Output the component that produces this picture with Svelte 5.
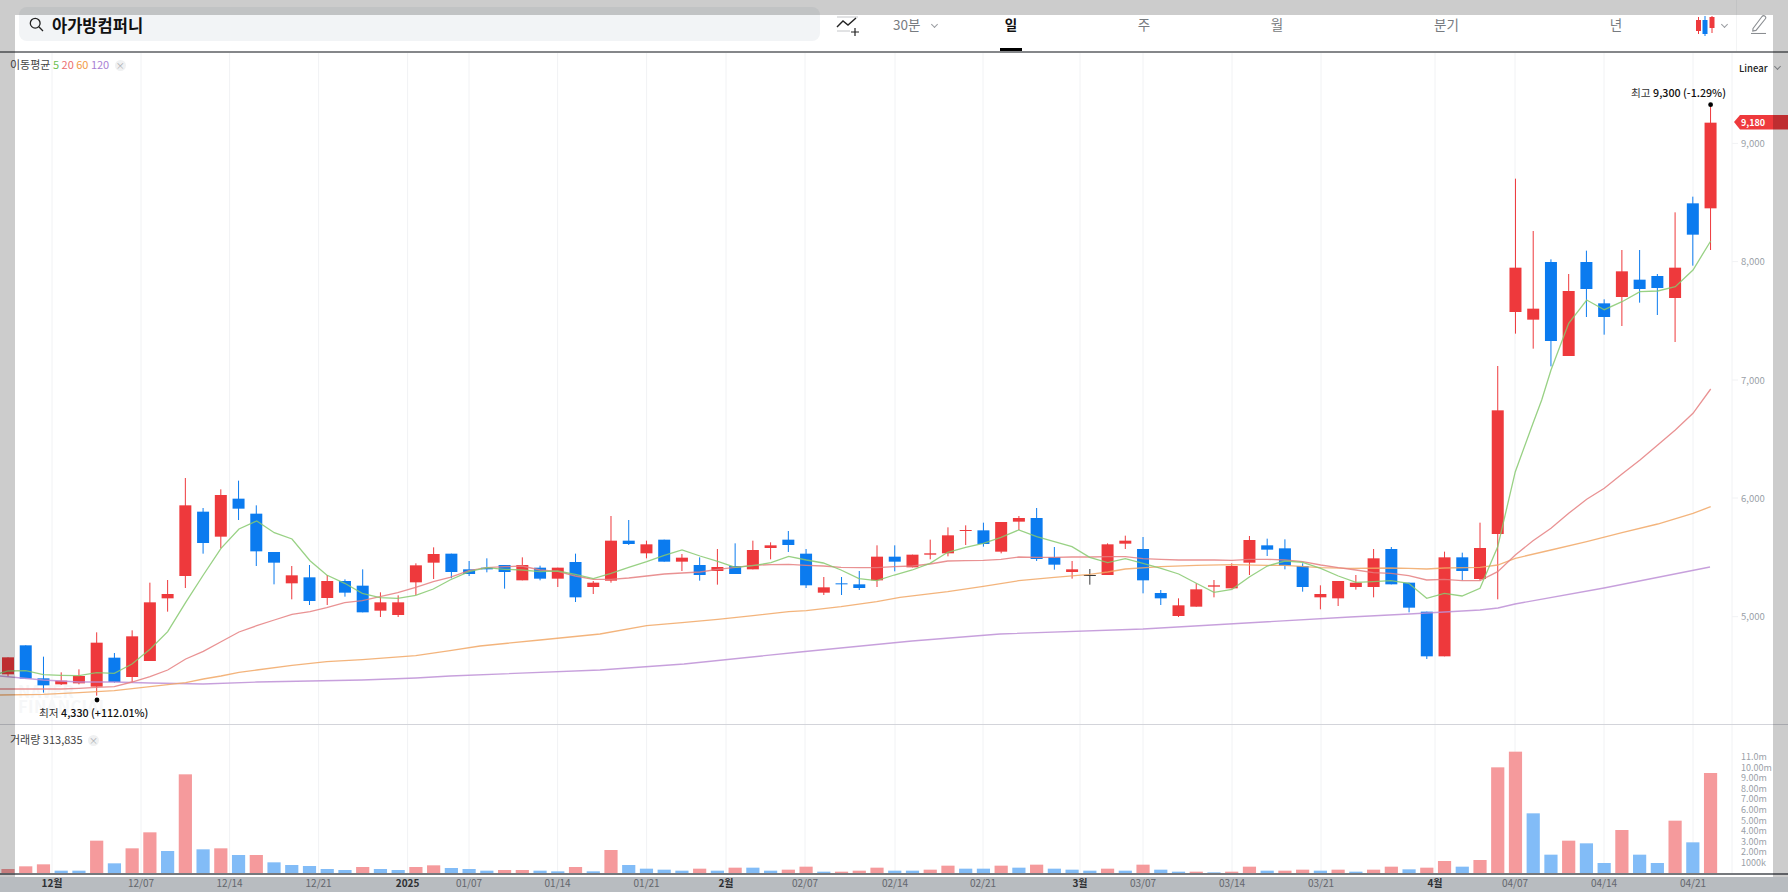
<script lang="ts">
	type Candle = { x: number; wt: number; bt: number; bb: number; wb: number; c: string };

	const step = 17.735;
	const cx = (i: number) => 8 + step * i;
	const color = { r: '#ee393c', b: '#0b7bef', k: '#3a3a3a' };

	// rows: wick top, body top, body bottom, wick bottom, colour (3x crop values)
	const rows: [number, any[][]][] = [
		[440, [
			[652, 652, 703, 710, 'r'], [616, 616, 716, 716, 'b'], [650, 715, 736, 758, 'b'], [697, 722, 733, 735, 'r'],
			[688, 708, 730, 733, 'r'], [577, 608, 740, 767, 'r'], [639, 653, 726, 728, 'b'], [571, 589, 711, 727, 'r'],
			[428, 487, 663, 663, 'r'], [420, 462, 475, 515, 'r'], [114, 196, 408, 444, 'r'], [204, 215, 309, 341, 'b'],
			[148, 165, 290, 325, 'r'], [122, 176, 206, 240, 'b'], [196, 221, 334, 378, 'b'], [336, 336, 368, 433, 'b'],
			[378, 406, 430, 478, 'r'], [375, 412, 483, 495, 'b'], [405, 423, 474, 495, 'r'], [418, 423, 458, 470, 'b'],
			[388, 437, 517, 517, 'b'], [457, 487, 512, 531, 'r'], [466, 487, 525, 531, 'r'], [370, 376, 427, 465, 'r'],
			[322, 342, 368, 417, 'r']
		]],
		[480, [
			[221, 221, 276, 295, 'b'], [243, 268, 282, 288, 'b'], [235, 263, 268, 277, 'b'], [255, 255, 276, 326, 'b'],
			[232, 255, 301, 301, 'r'], [257, 263, 296, 301, 'b'], [263, 263, 296, 321, 'r'], [221, 246, 352, 366, 'b'],
			[303, 308, 321, 342, 'r'], [108, 182, 302, 308, 'r'], [120, 182, 192, 195, 'b'], [182, 193, 220, 235, 'r'],
			[179, 179, 245, 245, 'b'], [222, 233, 245, 273, 'r'], [232, 255, 285, 302, 'b'], [207, 261, 273, 314, 'r'],
			[190, 258, 282, 282, 'b'], [182, 210, 268, 268, 'r'], [187, 196, 204, 238, 'r'], [153, 179, 195, 216, 'b'],
			[207, 221, 316, 324, 'b'], [291, 322, 338, 345, 'r'], [291, 310, 313, 345, 'b'], [273, 313, 324, 330, 'b'],
			[196, 230, 301, 321, 'r'], [196, 230, 245, 274, 'b'],
			[224, 224, 262, 262, 'r'], [179, 220, 224, 238, 'r'], [142, 166, 220, 229, 'r'], [136, 150, 153, 195, 'r'],
			[128, 151, 192, 200, 'b'], [126, 126, 215, 220, 'r'], [108, 114, 125, 150, 'r'], [84, 114, 237, 243, 'b'],
			[201, 231, 254, 269, 'b'], [243, 268, 276, 296, 'r'], [267, 285, 288, 314, 'k'], [190, 193, 285, 285, 'r'],
			[167, 182, 191, 207, 'r'], [171, 207, 301, 340, 'b'], [330, 339, 355, 375, 'b'], [355, 376, 408, 411, 'r'],
			[310, 328, 380, 380, 'r'], [300, 316, 320, 352, 'r'], [250, 258, 325, 325, 'r'], [168, 180, 248, 285, 'r'],
			[176, 196, 209, 228, 'b'], [178, 205, 257, 268, 'b'], [250, 258, 321, 335, 'b'], [316, 342, 352, 388, 'r'],
			[303, 303, 355, 378, 'r']
		]],
		[400, [
			[525, 548, 561, 569, 'r'], [447, 475, 561, 592, 'r'], [441, 447, 553, 553, 'b'], [548, 548, 623, 637, 'b'],
			[635, 635, 769, 777, 'b'], [455, 472, 769, 769, 'r'], [458, 472, 513, 541, 'b'], [368, 444, 537, 541, 'r'],
			[-102, 31, 402, 598, 'r']
		]],
		[80, [
			[296, 563, 696, 761, 'r'], [453, 686, 719, 806, 'r'], [538, 546, 783, 859, 'b'], [582, 633, 828, 828, 'r'],
			[512, 546, 627, 711, 'b'], [658, 670, 711, 764, 'b'], [510, 574, 651, 738, 'r'], [510, 599, 627, 668, 'b'],
			[582, 588, 624, 705, 'b'], [397, 563, 654, 786, 'r'], [350, 370, 464, 557, 'b'], [80, 128, 385, 510, 'r']
		]]
	];

	const candles: Candle[] = rows
		.flatMap(([off, list]) => list.map((r) => ({
			wt: off + r[0] / 3, bt: off + r[1] / 3, bb: off + r[2] / 3, wb: off + r[3] / 3, c: color[r[4]]
		})))
		.map((c, i) => ({ ...c, x: cx(i) }));

	// moving averages, [x, y] per crop with its offset
	function line(parts: [number, number, number[]][]): string {
		const pts: string[] = [];
		for (const [ox, oy, vals] of parts) {
			for (let i = 0; i < vals.length; i += 2) {
				pts.push(`${(ox + vals[i] / 3).toFixed(1)},${(oy + vals[i + 1] / 3).toFixed(1)}`);
			}
		}
		return pts.join(' ');
	}

	const ma5 = line([
		[0, 440, [0, 700, 24, 693, 77, 692, 130, 704, 183, 706, 237, 707, 290, 698, 343, 700, 396, 672, 450, 628, 503, 575, 557, 487, 610, 405, 663, 325, 717, 267, 770, 243, 823, 278, 876, 297, 930, 362, 980, 405, 1034, 430, 1087, 460, 1140, 473, 1193, 475, 1247, 466, 1300, 447]],
		[450, 480, [0, 300, 57, 275, 110, 263, 163, 268, 216, 270, 270, 275, 323, 273, 376, 283, 430, 296, 483, 280, 536, 262, 590, 245, 643, 226, 696, 210, 750, 228, 803, 244, 856, 262, 909, 257, 963, 248, 1016, 229, 1069, 240, 1120, 249, 1173, 270, 1227, 296, 1280, 302, 1333, 285]],
		[900, 480, [37, 270, 90, 250, 143, 217, 197, 202, 250, 190, 303, 172, 356, 150, 410, 170, 463, 185, 516, 200, 569, 232, 623, 248, 676, 236, 729, 250, 783, 265, 836, 282, 889, 310, 942, 337, 996, 328, 1049, 290, 1102, 258, 1155, 243, 1208, 247, 1262, 265, 1315, 288]],
		[1350, 400, [18, 547, 70, 545, 123, 542, 176, 550, 230, 595, 283, 580, 336, 588, 390, 565, 443, 440, 496, 215, 549, 70]],
		[1350, 80, [575, 960, 603, 870, 656, 730, 710, 660, 763, 689, 816, 665, 870, 635, 923, 633, 976, 620, 1029, 570, 1082, 483]]
	]);
	const ma20 = line([
		[0, 440, [0, 747, 77, 747, 183, 747, 237, 745, 290, 742, 343, 740, 396, 726, 450, 710, 503, 690, 557, 657, 610, 634, 663, 605, 717, 576, 770, 557, 823, 540, 876, 523, 930, 515, 980, 503, 1034, 488, 1087, 482, 1140, 470, 1193, 458, 1247, 442, 1300, 425]],
		[450, 480, [0, 292, 57, 272, 110, 263, 163, 260, 216, 258, 270, 270, 323, 274, 376, 288, 430, 298, 483, 298, 536, 294, 590, 288, 643, 282, 696, 279, 750, 276, 803, 268, 856, 262, 909, 256, 963, 254, 1016, 253, 1069, 256, 1120, 258, 1173, 262, 1227, 263, 1280, 263, 1333, 260]],
		[900, 480, [37, 258, 90, 252, 143, 243, 197, 242, 250, 241, 303, 238, 356, 231, 410, 232, 463, 232, 516, 231, 569, 231, 623, 230, 676, 230, 729, 236, 783, 238, 836, 240, 889, 240, 942, 240, 996, 241, 1049, 238, 1102, 238, 1155, 240, 1208, 245, 1262, 255, 1315, 263]],
		[1350, 400, [18, 510, 70, 518, 123, 520, 176, 527, 230, 540, 283, 538, 336, 542, 390, 542, 443, 515, 496, 465, 549, 422, 603, 385, 656, 340, 710, 298, 763, 265, 816, 222, 870, 180, 923, 135, 976, 90, 1029, 40, 1082, -33]]
	]);
	const ma60 = line([
		[0, 440, [0, 765, 130, 763, 237, 758, 343, 752, 450, 740, 557, 728, 610, 717, 663, 708, 717, 697, 770, 690, 876, 676, 980, 665, 1087, 659, 1247, 647, 1350, 632]],
		[480, 620, [0, 78, 180, 60, 360, 42]],
		[450, 480, [590, 437, 696, 428, 803, 418, 909, 407, 1016, 395, 1069, 392, 1173, 380, 1280, 365, 1350, 352]],
		[900, 480, [143, 335, 250, 319, 356, 302, 463, 292, 569, 283, 623, 276, 676, 267, 783, 260, 889, 256, 996, 254, 1102, 256, 1155, 256, 1262, 263]],
		[1350, 400, [0, 505, 123, 504, 176, 505, 230, 507, 283, 504, 390, 502, 443, 495, 496, 475, 603, 450, 710, 425, 816, 398, 923, 372, 1029, 340, 1082, 320]]
	]);
	const ma120 = '0,676 43,680 79,682 114,682 150,683 203,684 257,682 310,681 362,680 416,678 450,676 600,670 684,664 800,652 912,641 1000,634 1143,629 1350,617 1409,614 1480,610 1498,608 1515,604 1604,588 1710,567';

	// volume bars: height in px, colour
	const baseline = 873;
	const vol3: [string, number[]][] = [
		['r', [748, 740, 734]], ['b', [753, 753]], ['r', [663]], ['b', [731]], ['r', [686, 638]], ['b', [694]], ['r', [464]],
		['b', [689]], ['r', [686]], ['b', [706]], ['r', [706]], ['b', [728, 736, 739, 748, 751]], ['r', [742]], ['b', [748, 751]],
		['r', [742, 737]], ['b', [745, 748, 753]], ['r', [751, 751]], ['b', [753, 755]], ['r', [742]], ['b', [755]]
	];
	const vol10: [string, number[]][] = [
		['r', [391]], ['b', [436, 447, 450, 453]], ['r', [447]], ['b', [453]], ['r', [444]], ['b', [444, 453]], ['r', [450, 441]],
		['b', [456]], ['r', [456, 453, 444]], ['b', [453, 453]], ['r', [450, 438]], ['b', [447, 447]], ['r', [438]], ['b', [444]],
		['r', [435]], ['b', [447, 450, 453]], ['r', [447]], ['b', [453]], ['r', [435]], ['b', [450, 456]], ['r', [456]], ['b', [458]],
		['r', [456, 441]], ['b', [453]], ['r', [453, 450]], ['b', [453]], ['r', [450]], ['b', [456]], ['r', [450, 441]]
	];
	const vol4: [string, number[]][] = [
		['b', [510]], ['r', [505, 485]], ['b', [502]], ['r', [482, 204, 157]], ['b', [342, 466]], ['r', [424]], ['b', [432, 491]],
		['r', [392]], ['b', [466, 491]], ['r', [364]], ['b', [429]], ['r', [221]]
	];
	const flat = (g: [string, number[]][], base: number) =>
		g.flatMap(([c, list]) => list.map((v) => ({ c, h: (base - v) / 3 })));
	const volumes = [...flat(vol3, 760), ...flat(vol10, 460), ...flat(vol4, 521)];

	const grid = [52, 141, 229.6, 318.6, 407.6, 469, 557.6, 646.6, 726, 805, 895, 983, 1080, 1143, 1232, 1321, 1435, 1515, 1604, 1693];
	const dates = [
		['12월', 1], ['12/07'], ['12/14'], ['12/21'], ['2025', 1], ['01/07'], ['01/14'], ['01/21'], ['2월', 1], ['02/07'],
		['02/14'], ['02/21'], ['3월', 1], ['03/07'], ['03/14'], ['03/21'], ['4월', 1], ['04/07'], ['04/14'], ['04/21']
	];
	const prices = [['9,000', 143.4], ['8,000', 261.6], ['7,000', 380], ['6,000', 498], ['5,000', 616.7]];
	const volTicks = ['11.0m', '10.00m', '9.00m', '8.00m', '7.00m', '6.00m', '5.00m', '4.00m', '3.00m', '2.00m', '1000k'];
	const tabs = ['일', '주', '월', '분기', '년'];
</script>

<div class="page">
	<header class="top">
		<div class="search">
			<svg width="15" height="15" viewBox="0 0 15 15" fill="none" stroke="#222" stroke-width="1.3">
				<circle cx="6.2" cy="6.2" r="4.9" />
				<path d="M9.8 9.8 L14 14" />
			</svg>
			<span>아가방컴퍼니</span>
		</div>
		<div class="indicator">
			<svg width="24" height="21" viewBox="0 0 24 21" fill="none">
				<path d="M1 1 H22" stroke="#c4c6c9" />
				<path d="M1 15 H14" stroke="#c4c6c9" />
				<path d="M1 11 L7 5 L12 9 L20 2" stroke="#222" stroke-width="1.4" />
				<path d="M19 12 V20 M15 16 H23" stroke="#222" stroke-width="1.2" />
			</svg>
		</div>
		<div class="interval">30분 <i class="chev"></i></div>
		<nav class="tabs">
			{#each tabs as tab, i}
				<span class="tab tab{i}" class:on={i === 0}>{tab}</span>
			{/each}
		</nav>
		<div class="kind">
			<svg width="20" height="22" viewBox="0 0 20 22">
				<path d="M3.5 2 V19 M17 1 V18" stroke="#ee393c" />
				<path d="M10 1 V21" stroke="#0b7bef" />
				<rect x="1" y="5" width="5" height="11" fill="#ee393c" />
				<rect x="7.5" y="5" width="5" height="14" fill="#0b7bef" />
				<rect x="14.5" y="2" width="5" height="11" fill="#ee393c" />
			</svg>
			<i class="chev"></i>
		</div>
		<div class="draw">
			<svg width="16" height="20" viewBox="0 0 16 20" fill="none" stroke="#8a8d91" stroke-width="1.1">
				<path d="M2 14.5 L11 2.5 Q12.5 1 14 2.2 Q15.5 3.6 14.2 5 L5 16.4 L1.8 17 Z" />
				<path d="M0 19.5 H15" />
			</svg>
		</div>
	</header>

	<section class="price">
		<svg class="plot" width="1788" height="671" viewBox="0 53 1788 671">
			{#each grid as g}
				<line x1={g} x2={g} y1="53" y2="724" class="gridline" />
			{/each}
			<line x1="1732" x2="1732" y1="53" y2="724" class="gridline" />
			{#each prices as p}
				<line x1="1732" x2="1738" y1={p[1]} y2={p[1]} class="gridline" />
				<text x="1741" y={+p[1] + 3.5} class="tick">{p[0]}</text>
			{/each}

			<text x="18" y="698" class="mark">NAVER</text>
			<text x="18" y="713" class="mark">FINANCIAL</text>

			{#each candles as c}
				<line x1={c.x} x2={c.x} y1={c.wt} y2={c.wb} stroke={c.c} stroke-width="1" />
				<rect x={c.x - 6} y={c.bt} width="12" height={c.bb - c.bt} fill={c.c} />
			{/each}

			<polyline points={ma120} class="ma" stroke="#bd8fd6" />
			<polyline points={ma60} class="ma" stroke="#f1a765" />
			<polyline points={ma20} class="ma" stroke="#e57f80" />
			<polyline points={ma5} class="ma" stroke="#86c96f" />

			<circle cx="97" cy="700" r="2.4" fill="#000" />
			<circle cx="1710.6" cy="104.7" r="2.4" fill="#000" />
			<text x="39" y="717" class="note">최저 <tspan class="strong">4,330 (+112.01%)</tspan></text>
			<text x="1631" y="97" class="note">최고 <tspan class="strong">9,300 (-1.29%)</tspan></text>

			<path d="M1734 122 L1740 115 H1788 V129.4 H1740 Z" fill="#ee393c" />
			<text x="1741" y="125.5" class="last">9,180</text>
		</svg>
		<div class="legend">
			이동평균 <b class="c5">5</b> <b class="c20">20</b> <b class="c60">60</b> <b class="c120">120</b>
			<i class="close">×</i>
		</div>
		<div class="scale">Linear <i class="chev"></i></div>
	</section>

	<section class="volume">
		<svg class="plot" width="1788" height="150" viewBox="0 725 1788 150">
			{#each grid as g}
				<line x1={g} x2={g} y1="725" y2="873" class="gridline" />
			{/each}
			<line x1="1732" x2="1732" y1="725" y2="873" class="gridline" />
			<rect x="0" y="873" width="1788" height="2" fill="#76797d" />
			{#each volumes as v, i}
				<rect x={cx(i) - 6.6} y={baseline - v.h} width="13.2" height={v.h} fill={v.c === 'r' ? '#f59a9c' : '#82bcf7'} />
			{/each}
			{#each volTicks as t, i}
				<text x="1741" y={760 + i * 10.6} class="tick small">{t}</text>
			{/each}
		</svg>
		<div class="legend">거래량 313,835 <i class="close">×</i></div>
	</section>

	<footer class="axis">
		<svg class="plot" width="1788" height="17" viewBox="0 875 1788 17">
			<rect x="0" y="877" width="1788" height="15" fill="#e7ebf0" />
			{#each dates as d, i}
				<text x={grid[i]} y="887" class="date" class:bold={d[1]}>{d[0]}</text>
			{/each}
		</svg>
	</footer>

	<div class="frame"></div>
</div>

<style>
	:global(body) {
		font-family: 'Noto Sans CJK KR', 'Noto Sans', sans-serif;
		background: #fff;
		overflow: hidden;
	}

	.page {
		position: relative;
		width: 1788px;
		height: 892px;
		display: flex;
		flex-direction: column;
		overflow: hidden;
		background: #fff;
		color: #222;
	}

	/* the grey border around the popup sits over everything */
	.frame {
		position: absolute;
		inset: 0;
		border: 15px solid rgba(0, 0, 0, 0.2);
		pointer-events: none;
	}

	.top {
		flex: none;
		height: 53px;
		box-sizing: border-box;
		border-bottom: 2px solid #85878a;
		display: flex;
		align-items: flex-start;
		font-size: 13.5px;
		color: #777b80;
	}

	.search {
		flex: none;
		width: 801px;
		height: 34px;
		margin: 7px 0 0 19px;
		padding: 1px 0 0 10px;
		box-sizing: border-box;
		border-radius: 8px;
		background: #f2f4f6;
		display: flex;
		align-items: center;
		gap: 8px;
		font-size: 16.5px;
		font-weight: 700;
		color: #111;
	}

	.indicator {
		flex: none;
		width: 70px;
		height: 51px;
		padding: 16px 14px 0 0;
		box-sizing: border-box;
		display: flex;
		justify-content: center;
	}

	.interval {
		flex: none;
		width: 55px;
		margin-top: 15px;
		padding-left: 3px;
		box-sizing: border-box;
		line-height: 18px;
		white-space: nowrap;
	}

	.chev {
		display: inline-block;
		width: 4px;
		height: 4px;
		margin: 0 0 3px 9px;
		border-right: 1px solid #9a9da1;
		border-bottom: 1px solid #9a9da1;
		transform: rotate(45deg);
	}

	.tabs {
		flex: none;
		display: flex;
		height: 51px;
	}

	.tab {
		position: relative;
		flex: none;
		width: 132px;
		padding-top: 15px;
		box-sizing: border-box;
		line-height: 18px;
		text-align: center;
	}

	.tab1 { width: 134px; }
	.tab3 { width: 207px; }

	.tab.on {
		font-weight: 700;
		color: #111;
	}

	.tab.on::after {
		content: '';
		position: absolute;
		left: 55px;
		bottom: 0;
		width: 22px;
		height: 3px;
		background: #000;
	}

	.kind {
		flex: none;
		width: 55px;
		height: 51px;
		padding: 15px 0 0 13px;
		box-sizing: border-box;
		border-right: 1px solid #f3f4f5;
		display: flex;
		align-items: flex-start;
	}

	.kind .chev {
		margin: 7px 0 0 7px;
	}

	.draw {
		flex: none;
		padding: 14px 0 0 14px;
	}

	.price {
		position: relative;
		flex: none;
		height: 671px;
		border-bottom: 1px solid #d3d4da;
		box-sizing: content-box;
	}

	.volume {
		position: relative;
		flex: none;
		height: 150px;
	}

	.axis {
		flex: none;
		height: 17px;
	}

	.plot {
		display: block;
	}

	.legend {
		position: absolute;
		left: 10px;
		top: 4px;
		font-size: 11px;
		line-height: 14px;
		color: #444;
		white-space: nowrap;
	}

	.volume .legend {
		top: 7px;
		font-size: 11px;
	}

	.legend b { font-weight: 400; }
	.c5 { color: #6cbf52; }
	.c20 { color: #ec6d6e; }
	.c60 { color: #f29a45; }
	.c120 { color: #a97ed4; }

	.close {
		display: inline-block;
		width: 11px;
		height: 11px;
		margin-left: 3px;
		border-radius: 50%;
		background: #f0f1f2;
		color: #a8abaf;
		font-size: 9px;
		font-style: normal;
		line-height: 11px;
		text-align: center;
	}

	.scale {
		position: absolute;
		left: 1739px;
		top: 8px;
		font-size: 9.5px;
		font-weight: 500;
		line-height: 14px;
		color: #222;
		white-space: nowrap;
	}

	.scale .chev { margin-left: 5px; }

	.gridline {
		stroke: #f1f2f4;
		stroke-width: 1;
	}

	.ma {
		fill: none;
		stroke-width: 1.3;
		stroke-opacity: 0.85;
	}

	.tick {
		font-size: 9.5px;
		fill: #9a9fa8;
	}

	.tick.small { font-size: 9px; }

	.mark {
		font-size: 16.5px;
		font-weight: 700;
		fill: #f6f7f8;
		letter-spacing: 0.4px;
	}

	.note {
		font-size: 10.7px;
		fill: #333;
	}

	.strong {
		font-weight: 500;
		fill: #111;
	}

	.last {
		font-size: 9px;
		font-weight: 700;
		fill: #fff;
	}

	.date {
		font-size: 10px;
		fill: #7c818a;
		text-anchor: middle;
	}

	.date.bold {
		font-weight: 700;
		fill: #3a3d42;
	}
</style>
